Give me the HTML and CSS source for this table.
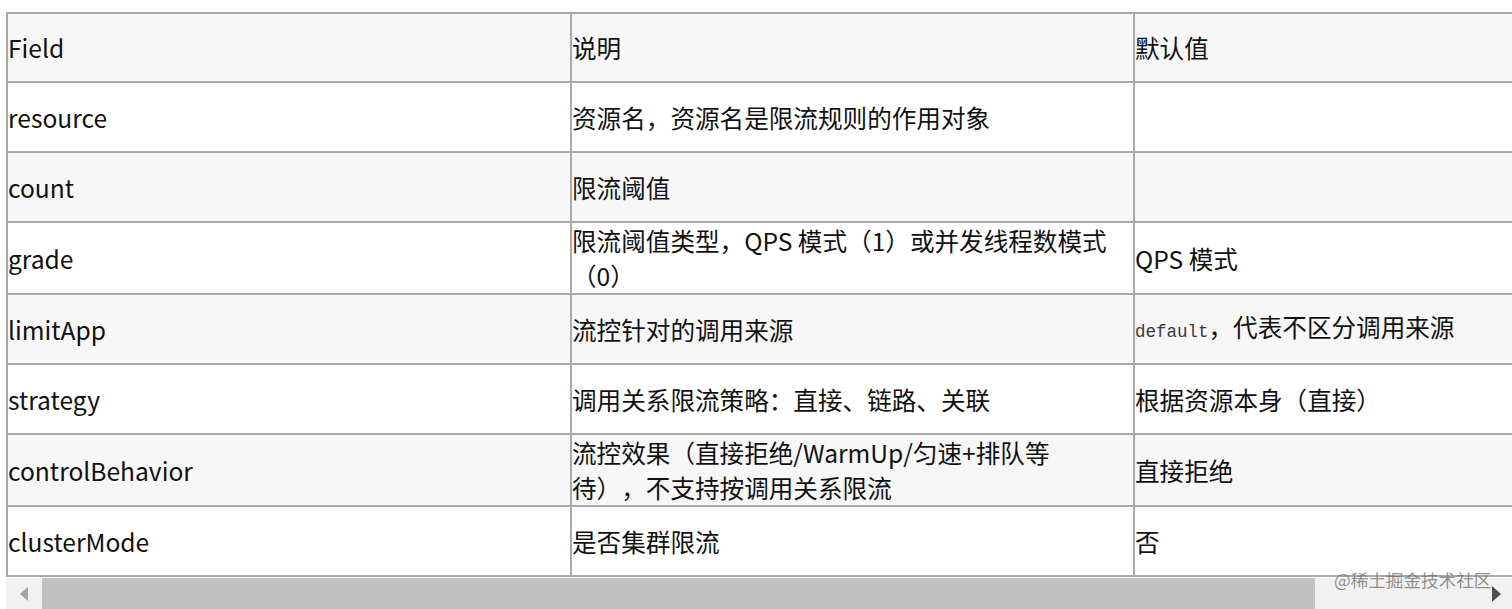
FILE: index.html
```html
<!DOCTYPE html>
<html lang="zh-CN">
<head>
<meta charset="utf-8">
<title>Flow rule fields</title>
<link rel="stylesheet" href="styles.css">
</head>
<body>
<div class="page">
  <div class="scroller">
    <table class="rules">
      <colgroup><col class="c1"><col class="c2"><col class="c3"></colgroup>
      <thead>
        <tr class="alt head"><td>Field</td><td>说明</td><td>默认值</td></tr>
      </thead>
      <tbody>
        <tr><td>resource</td><td>资源名，资源名是限流规则的作用对象</td><td></td></tr>
        <tr class="alt"><td>count</td><td>限流阈值</td><td></td></tr>
        <tr><td>grade</td><td>限流阈值类型，QPS 模式（1）或并发线程数模式（0）</td><td>QPS 模式</td></tr>
        <tr class="alt"><td>limitApp</td><td>流控针对的调用来源</td><td><code>default</code>，代表不区分调用来源</td></tr>
        <tr><td>strategy</td><td>调用关系限流策略：直接、链路、关联</td><td>根据资源本身（直接）</td></tr>
        <tr class="alt"><td>controlBehavior</td><td>流控效果（直接拒绝/WarmUp/匀速+排队等<br>待），不支持按调用关系限流</td><td>直接拒绝</td></tr>
        <tr><td>clusterMode</td><td>是否集群限流</td><td>否</td></tr>
      </tbody>
    </table>
  </div>
  <div class="scrollbar">
    <div class="arrow left"></div>
    <div class="track"><div class="thumb"></div></div>
    <div class="arrow right"></div>
  </div>
  <div class="watermark">@稀土掘金技术社区</div>
</div>
</body>
</html>
```

FILE: styles.css
```css
html, body {
  margin: 0;
  padding: 0;
  background: #ffffff;
}

body {
  font-family: "Noto Sans CJK SC", "Noto Sans", sans-serif;
  color: #111111;
  overflow: hidden;
}

.page {
  position: relative;
  padding: 12px 0 0 6px;
  height: 609px;
  box-sizing: border-box;
}

.scroller {
  overflow: hidden;
  width: 1506px;
}

.rules {
  border-collapse: collapse;
  table-layout: fixed;
  width: 1695px;
  font-size: 24.6px;
  line-height: 35px;
  text-spacing-trim: space-all;
}

.rules col.c1 { width: 564px; }
.rules col.c2 { width: 563px; }
.rules col.c3 { width: 568px; }

.rules td {
  border: 2px solid #a9a9a9;
  padding: 0 1px 0 0;
  height: 68px;
  vertical-align: middle;
  background: #ffffff;
}

.rules tr.head td {
  height: 67px;
}

.rules tr.alt td {
  background: #f7f7f7;
}

.rules code {
  font-family: "Liberation Mono", "DejaVu Sans Mono", monospace;
  font-size: 17.5px;
  color: #3a3a3a;
}

.scrollbar {
  display: flex;
  height: 34px;
  margin-top: 1px;
  background: #f1f1f1;
  width: 1506px;
}

.arrow {
  width: 36px;
  flex: none;
  display: flex;
  align-items: center;
  justify-content: center;
}

.arrow.left::before {
  content: "";
  width: 0;
  height: 0;
  border-top: 7px solid transparent;
  border-bottom: 7px solid transparent;
  border-right: 8px solid #a3a3a3;
  margin-top: -2px;
}

.arrow.right::before {
  content: "";
  width: 0;
  height: 0;
  border-top: 8px solid transparent;
  border-bottom: 8px solid transparent;
  border-left: 9px solid #505050;
  margin-top: -2px;
  margin-left: 4px;
}

.track {
  flex: 1;
  display: flex;
}

.thumb {
  width: 1273px;
  background: #c1c1c1;
}

.watermark {
  position: absolute;
  left: 1334px;
  top: 567px;
  font-size: 17.6px;
  line-height: 26px;
  color: rgba(110, 110, 110, 0.75);
  white-space: nowrap;
}
```
